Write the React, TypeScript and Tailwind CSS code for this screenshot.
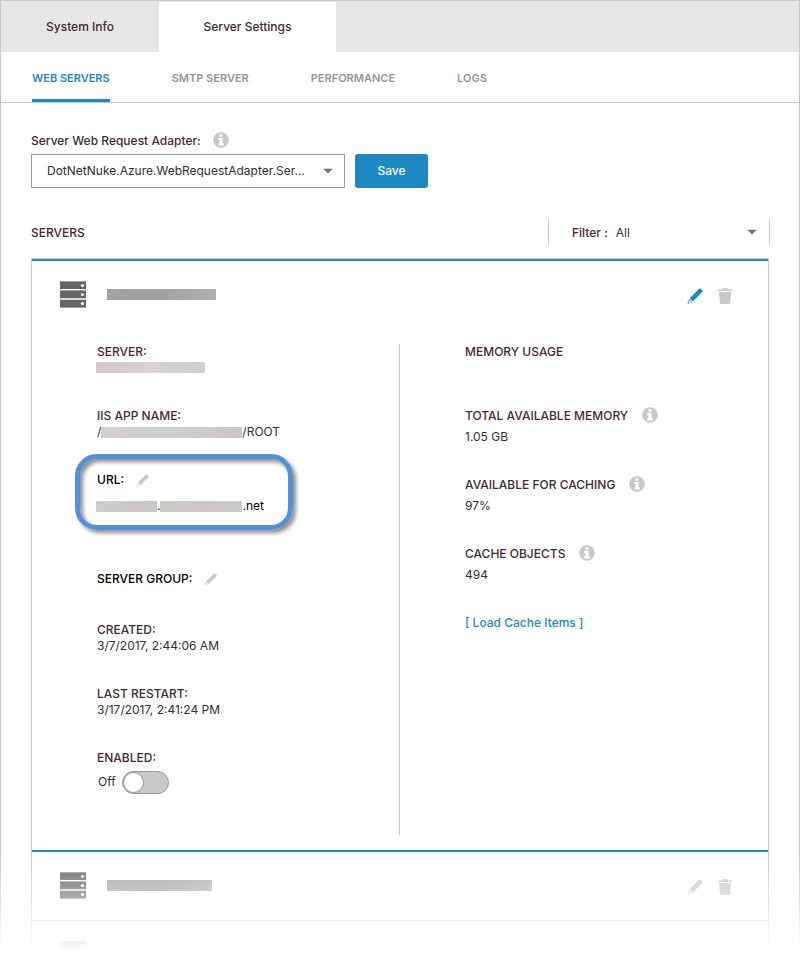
import type { ReactNode } from "react";

function InfoIcon() {
  return (
    <svg viewBox="0 0 16 16" className="mb-[2px] size-4 shrink-0" aria-hidden="true">
      <circle cx="8" cy="8" r="7.8" fill="#c8c8c8" />
      <path d="M6.400 2.200h3.200v2.600H6.400zM5.200 6h4.400v5.500h1.300v1.900H5.100v-1.900h1.300V7.900H5.200z" fill="#fff" />
    </svg>
  );
}

function PencilIcon({ className }: { className: string }) {
  return (
    <svg viewBox="0 0 16 16" className={className} fill="currentColor" aria-hidden="true">
      <path d="M12.100.8a1.100 1.100 0 0 1 1.600 0l1.600 1.600a1.100 1.100 0 0 1 0 1.600L5.900 13.400 2.700 10.200z" />
      <path d="M2 10.900 5.200 14.100 3.900 14.900 3.700 13.100 2.200 12.700 1.300 13.700 2.100 14.700 3.200 14.900.4 15.700z" />
    </svg>
  );
}

function TrashIcon() {
  return (
    <svg viewBox="0 0 16 16" className="size-4" fill="#c8c8c8" aria-hidden="true">
      <path d="M5.200.3h5.600V1.400H15V3H1V1.400h4.200z" />
      <path d="M2 4h12L13 16H3z" />
    </svg>
  );
}

function ServerIcon() {
  return (
    <svg viewBox="0 0 26 27" className="h-[27px] w-[26px] shrink-0" aria-hidden="true">
      <path d="M0 0h26v8H0zM0 9h26v8H0zM0 18h26v9H0z" fill="#666" />
      <path d="M0 0h26v1H0zM0 9h26v1H0zM0 26h26v1H0z" fill="#a0a0a0" />
      <path d="M0 17h26v2H0z" fill="#d8d8d8" />
      <g fill="#fff">
        <circle cx="22.500" cy="4.500" r="1.600" />
        <circle cx="22.500" cy="13.500" r="1.600" />
        <circle cx="22.500" cy="22.500" r="1.600" />
      </g>
    </svg>
  );
}

function Caret() {
  return (
    <svg
      viewBox="0 0 10 5"
      className="pointer-events-none absolute top-1/2 right-3 h-[5px] w-[10px] -translate-y-1/2"
      aria-hidden="true"
    >
      <path d="M0 0h10L5 5z" fill="#6f7273" />
    </svg>
  );
}

function Term({ children }: { children: ReactNode }) {
  return <dt className="font-medium text-[#46292b]">{children}</dt>;
}

function InfoTerm({ label }: { label: string }) {
  return (
    <dt className="flex h-4 items-center gap-[14px] font-medium text-[#46292b]">
      {label}
      <InfoIcon />
    </dt>
  );
}

function EditTerm({ label }: { label: string }) {
  return (
    <dt className="flex h-4 items-center gap-3 font-medium text-black">
      {label}
      <button type="button" aria-label="Edit" className="text-[#c8c8c8]">
        <PencilIcon className="size-[13px]" />
      </button>
    </dt>
  );
}

function ServerHeader({ nameWidth, active }: { nameWidth: string; active?: boolean }) {
  return (
    <div className="flex h-[67px] items-center pr-[35px] pl-7">
      <ServerIcon />
      <span
        className={`mb-px ml-[21px] h-[11px] bg-linear-to-r from-[#a3a3a3] via-[#a0a0a0] to-[#b0b0b0] ${nameWidth}`}
      />
      <div className="ml-auto flex items-center gap-[14px] pt-[3px]">
        <button type="button" aria-label="Edit server" className={active ? "text-[#1e88c3]" : "text-[#c8c8c8]"}>
          <PencilIcon className="size-4" />
        </button>
        <button type="button" aria-label="Delete server">
          <TrashIcon />
        </button>
      </div>
    </div>
  );
}

const subTabs = ["WEB SERVERS", "SMTP SERVER", "PERFORMANCE", "LOGS"];

export default function App() {
  return (
    <div className="relative h-screen overflow-hidden bg-white font-['Inter','Liberation_Sans',sans-serif] text-xs leading-4 text-[#3a2a2c]">
      <div className="border border-[#c8c8c8]">
        <nav className="flex h-[51px] bg-[#e5e7e6] text-[#46292b]">
          <button type="button" className="w-[158px] font-medium">
            System Info
          </button>
          <button type="button" className="mt-px w-[177px] bg-white pb-px font-medium">
            Server Settings
          </button>
        </nav>

        <nav className="flex h-[51px] gap-[62px] border-b border-[#c8c8c8] pl-[31px] text-[11px]">
          {subTabs.map((tab, i) => (
            <button
              key={tab}
              type="button"
              className={
                i === 0
                  ? "border-b-3 border-[#1e88c3] pt-[5px] font-semibold text-[#1e88c3]"
                  : "border-b-3 border-transparent pt-[5px] font-semibold text-[#959595]"
              }
            >
              {tab}
            </button>
          ))}
        </nav>

        <main className="px-[30px] pt-[30px]">
          <div className="flex h-4 items-center gap-3 font-medium text-[#46292b]">
            <label htmlFor="adapter">Server Web Request Adapter:</label>
            <InfoIcon />
          </div>
          <div className="mt-[5px] flex gap-[10px]">
            <div className="relative w-[314px]">
              <select
                id="adapter"
                className="h-[34px] w-full appearance-none border border-[#959695] bg-white pr-8 pl-[15px]"
              >
                <option>DotNetNuke.Azure.WebRequestAdapter.Ser...</option>
              </select>
              <Caret />
            </div>
            <button type="button" className="h-[34px] w-[73px] rounded-[3px] bg-[#1e88c3] font-medium text-white">
              Save
            </button>
          </div>

          <div className="mt-8 flex h-6 items-center justify-between">
            <h2 className="pt-[2px] font-medium text-[#46292b]">SERVERS</h2>
            <div className="relative -mr-px flex h-6 w-[222px] items-center border-x border-[#c8c8c8] pt-[2px] pl-[23px]">
              <label htmlFor="filter" className="font-medium text-[#46292b]">
                Filter :
              </label>
              <select id="filter" className="h-full flex-1 appearance-none bg-transparent pl-2">
                <option>All</option>
              </select>
              <Caret />
            </div>
          </div>

          <div className="mt-[14px] border border-[#c8c8c8]">
            <section className="border-y-2 border-[#1e88c3]">
              <ServerHeader nameWidth="w-[109px]" active />
              <div className="mt-4 mb-[15px] flex min-h-[491px]">
                <dl className="w-1/2 border-r border-[#c8c8c8] pl-[65px]">
                  <Term>SERVER:</Term>
                  <dd className="flex h-4 items-center pb-px">
                    <span className="-ml-px h-[11px] w-[109px] bg-linear-to-r from-[#d3c6ca] via-[#d6d2d6] to-[#cfcfcf]" />
                  </dd>
                  <div className="mt-8">
                    <Term>IIS APP NAME:</Term>
                    <dd className="flex h-4 items-center">
                      /<span className="h-[11px] w-[141px] bg-linear-to-r from-[#d3ced4] via-[#cfcfcd] to-[#c9c5c8]" />
                      /ROOT
                    </dd>
                  </div>
                  <div className="relative mt-8">
                    <div className="pointer-events-none absolute -top-[18px] -left-[22px] h-[76px] w-[218px] rounded-[22px] border-5 border-[#558fd6] shadow-[3px_3px_4px_rgba(0,0,0,0.45),inset_3px_3px_4px_rgba(0,0,0,0.45)]" />
                    <EditTerm label="URL:" />
                    <dd className="mt-[10px] flex h-4 items-center text-black">
                      <span className="-ml-px h-[11px] w-[61px] bg-linear-to-r from-[#cdcecc] via-[#cdc8cd] to-[#c6cac2]" />
                      .
                      <span className="h-[11px] w-[82px] bg-linear-to-r from-[#c9ccc6] via-[#cdc7cc] to-[#c8cccd]" />
                      .net
                    </dd>
                  </div>
                  <div className="mt-[57px]">
                    <EditTerm label="SERVER GROUP:" />
                  </div>
                  <div className="mt-[35px]">
                    <Term>CREATED:</Term>
                    <dd>3/7/2017, 2:44:06 AM</dd>
                  </div>
                  <div className="mt-8">
                    <Term>LAST RESTART:</Term>
                    <dd>3/17/2017, 2:41:24 PM</dd>
                  </div>
                  <div className="mt-8">
                    <Term>ENABLED:</Term>
                    <dd className="mt-[5px] pl-px">
                      <label className="flex items-center gap-[6px]">
                        <span className="pb-px">Off</span>
                        <input
                          type="checkbox"
                          role="switch"
                          aria-label="Enabled"
                          className="h-[23px] w-[47px] appearance-none rounded-full border border-[#959695] bg-[#c8c8c8] before:block before:size-[21px] before:rounded-full before:border before:border-[#959695] before:bg-white checked:bg-[#1e88c3] checked:before:ml-6"
                        />
                      </label>
                    </dd>
                  </div>
                </dl>

                <div className="pl-[65px]">
                  <h3 className="font-medium text-[#46292b]">MEMORY USAGE</h3>
                  <dl className="mt-12 flex flex-col gap-8">
                    <div>
                      <InfoTerm label="TOTAL AVAILABLE MEMORY" />
                      <dd className="mt-[5px]">1.05 GB</dd>
                    </div>
                    <div>
                      <InfoTerm label="AVAILABLE FOR CACHING" />
                      <dd className="mt-[5px]">97%</dd>
                    </div>
                    <div>
                      <InfoTerm label="CACHE OBJECTS" />
                      <dd className="mt-[5px]">494</dd>
                    </div>
                  </dl>
                  <a href="#cache" className="mt-8 block font-medium text-[#1e88c3]">
                    [ Load Cache Items ]
                  </a>
                </div>
              </div>
            </section>
            <section className="border-b border-[#c8c8c8] pb-px">
              <ServerHeader nameWidth="w-[105px]" />
            </section>
            <section>
              <ServerHeader nameWidth="w-[106px]" />
            </section>
          </div>
        </main>
      </div>

      <div className="pointer-events-none absolute inset-x-0 bottom-0 h-[100px] bg-linear-to-b from-white/0 to-white to-97%" />
    </div>
  );
}
